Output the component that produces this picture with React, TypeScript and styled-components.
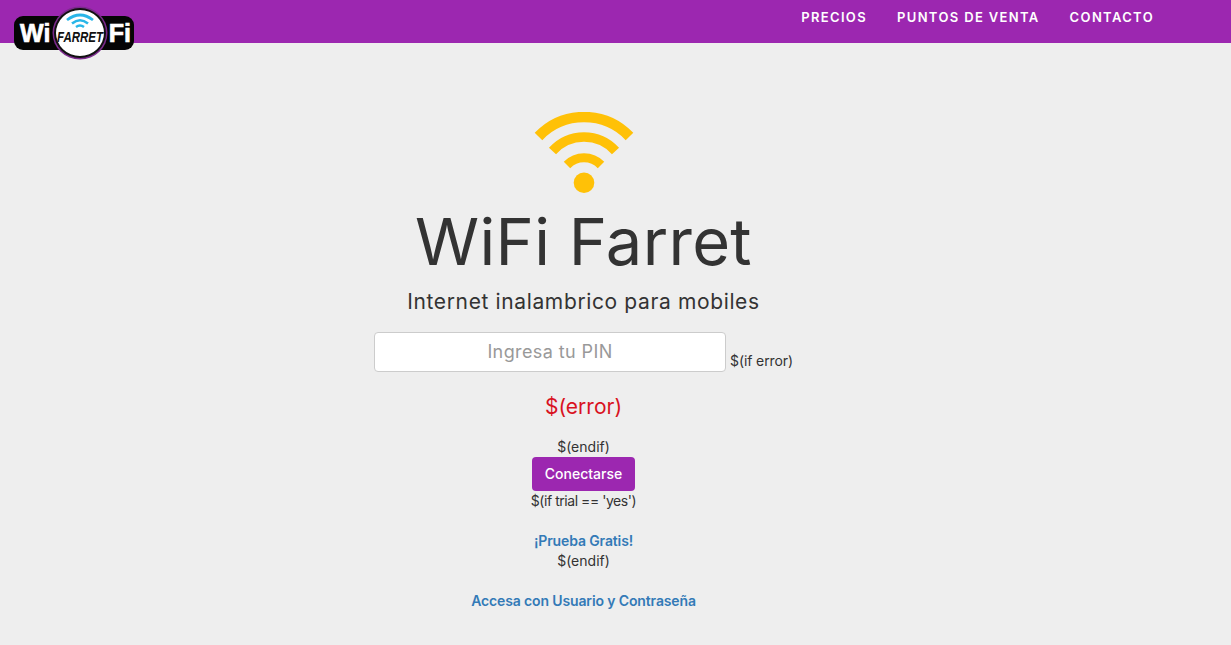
import React from 'react';
import styled, { createGlobalStyle } from 'styled-components';

const GlobalStyle = createGlobalStyle`
    html, body {
        margin: 0;
        padding: 0;
        background: #eeeeee;
    }
    body {
        font-family: Inter, "Open Sans", sans-serif;
        color: #333333;
    }
`;

const Page = styled.div`
    height: 645px;
    overflow: hidden;
    position: relative;
`;

const Header = styled.header`
    height: 43px;
    background: #9c27b0;
    display: flex;
    justify-content: flex-end;
    align-items: flex-start;
    gap: 30px;
    padding: 10px 77px 0 0;
    box-sizing: border-box;
`;

const NavLink = styled.a`
    color: #fff;
    font-size: 13px;
    font-weight: 600;
    line-height: 15px;
    letter-spacing: 1.35px;
    text-transform: uppercase;
`;

const Logo = styled.div`
    position: absolute;
    left: 14px;
    top: 8px;
    width: 120px;
    height: 50px;
`;

const LogoBar = styled.div`
    position: absolute;
    left: 0;
    top: 8px;
    width: 120px;
    height: 34px;
    background: #050505;
    border-radius: 9px;
    display: flex;
    justify-content: space-between;
    align-items: center;
    padding: 0 3px 0 6px;
    box-sizing: border-box;
`;

const LogoWord = styled.span`
    color: #fff;
    font-family: "Liberation Sans", sans-serif;
    font-weight: 700;
    font-size: 25px;
    line-height: 25px;
    -webkit-text-stroke: 0.7px #fff;
`;

const LogoBadge = styled.div`
    position: absolute;
    left: 40px;
    top: 0;
    width: 52px;
    height: 50px;
    border-radius: 50%;
    background: #fff;
    border: 2px solid #111;
    box-shadow: 0 0 0 1.5px #7b2a8c;
    box-sizing: border-box;
    display: flex;
    flex-direction: column;
    align-items: center;
    padding-top: 2px;
`;

const BadgeName = styled.span`
    color: #111;
    font-family: "Liberation Sans", sans-serif;
    font-style: italic;
    font-weight: 700;
    font-size: 11.5px;
    line-height: 12px;
    margin-top: 2px;
    transform: scaleY(1.3);
`;

const Main = styled.main`
    display: flex;
    flex-direction: column;
    align-items: center;
    padding: 69px 64px 0 0;
    text-align: center;
`;

const WifiIcon = styled.svg`
    display: block;
    width: 100px;
    height: 82px;
`;

const Title = styled.h1`
    margin: 11px 0 0;
    font-size: 65px;
    line-height: 74px;
    font-weight: 400;
    color: #333;
    letter-spacing: 0.3px;
`;

const Subtitle = styled.p`
    margin: 9px 0 0;
    font-size: 21px;
    line-height: 28px;
    font-weight: 400;
    color: #333;
    letter-spacing: 0.63px;
`;

const PinRow = styled.div`
    display: flex;
    align-items: flex-end;
    gap: 4px;
    margin-top: 16px;
`;

const PinInput = styled.input`
    width: 352px;
    height: 40px;
    box-sizing: border-box;
    background: #fff;
    border: 1px solid #cccccc;
    border-radius: 4px;
    font-family: inherit;
    font-size: 18px;
    letter-spacing: 0.4px;
    text-align: center;
    color: #333;
    padding: 0 12px 2px;
    &::placeholder {
        color: #999;
        opacity: 1;
    }
`;

const Plain = styled.div`
    font-size: 14px;
    line-height: 20px;
    color: #333;
`;

const PinNote = styled(Plain)`
    margin-bottom: 1px;
    letter-spacing: -0.1px;
`;

const TrialNote = styled(Plain)`
    letter-spacing: -0.45px;
`;

const ErrorText = styled.div`
    margin-top: 23px;
    font-size: 21px;
    line-height: 24px;
    color: #d9121f;
`;

const EndifTop = styled(Plain)`
    margin-top: 18px;
`;

const ConnectButton = styled.button`
    width: 103px;
    height: 34px;
    border: none;
    border-radius: 4px;
    background: #9c27b0;
    color: #fff;
    font-family: inherit;
    font-size: 14px;
    font-weight: 500;
    padding: 0 0 2px;
`;

const TextLink = styled.a<{ $gap: number }>`
    display: block;
    margin-top: ${(p) => p.$gap}px;
    color: #337ab7;
    font-size: 14px;
    line-height: 20px;
    font-weight: 600;
    letter-spacing: -0.13px;
`;

const App: React.FC = () => {
    return (
        <Page>
            <GlobalStyle />
            <Header>
                <NavLink>Precios</NavLink>
                <NavLink>Puntos de venta</NavLink>
                <NavLink>Contacto</NavLink>
            </Header>
            <Logo>
                <LogoBar>
                    <LogoWord>Wi</LogoWord>
                    <LogoWord>Fi</LogoWord>
                </LogoBar>
                <LogoBadge>
                    <svg width="30" height="17" viewBox="0 0 30 17" fill="none" stroke="#29b6e8" strokeLinecap="butt">
                        <path d="M2 8 Q15 -2 28 8" strokeWidth="2.8" />
                        <path d="M7 11.5 Q15 5 23 11.5" strokeWidth="2.6" />
                        <path d="M11 15 Q15 12 19 15" strokeWidth="2.4" />
                    </svg>
                    <BadgeName>FARRET</BadgeName>
                </LogoBadge>
            </Logo>
            <Main>
                <WifiIcon viewBox="0 0 100 82" fill="none">
                    <path d="M4.5 24.5 A63 63 0 0 1 95.5 24.5" stroke="#ffc107" strokeWidth="10.5" />
                    <path d="M18.5 39 A42.4 42.4 0 0 1 81.5 39" stroke="#ffc107" strokeWidth="9.5" />
                    <path d="M33 53 A23.7 23.7 0 0 1 67 53" stroke="#ffc107" strokeWidth="9" />
                    <circle cx="50" cy="70.7" r="10.3" fill="#ffc107" />
                </WifiIcon>
                <Title>WiFi Farret</Title>
                <Subtitle>Internet inalambrico para mobiles</Subtitle>
                <PinRow>
                    <PinInput placeholder="Ingresa tu PIN" />
                    <PinNote>$(if error)</PinNote>
                </PinRow>
                <ErrorText>$(error)</ErrorText>
                <EndifTop>$(endif)</EndifTop>
                <ConnectButton>Conectarse</ConnectButton>
                <TrialNote>$(if trial == 'yes')</TrialNote>
                <TextLink $gap={20}>¡Prueba Gratis!</TextLink>
                <Plain>$(endif)</Plain>
                <TextLink $gap={20}>Accesa con Usuario y Contraseña</TextLink>
            </Main>
        </Page>
    );
};

export default App;
